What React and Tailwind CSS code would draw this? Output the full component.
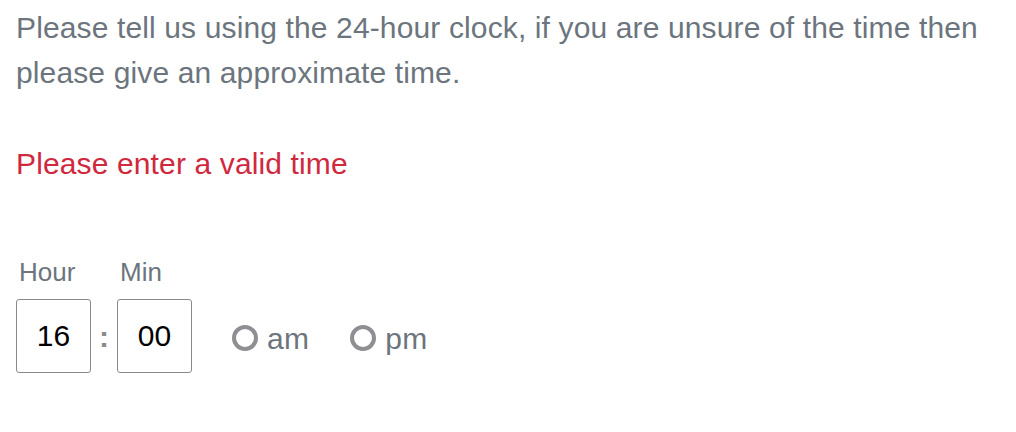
import React from "react";

function Radio({ label }) {
  return (
    <label className="flex items-center cursor-pointer">
      <span className="w-[26px] h-[26px] rounded-full border-[4px] border-[#8e8e93] bg-white" />
      <span className="ml-[9px] text-[30px] leading-[45px] tracking-[0.3px] text-[#6c757d]">{label}</span>
    </label>
  );
}

export default function App() {
  return (
    <div className="w-[1016px] h-[432px] bg-white px-4 pt-[5px] font-['Liberation_Sans',Arial,sans-serif]">
      <p className="text-[30px] leading-[45px] tracking-[0.13px] text-[#6c757d]">
        {"Please tell us using the 24-hour clock, if you are unsure of the time then please give an approximate time."}
      </p>

      <p className="mt-[46px] text-[30px] leading-[45px] tracking-[0.13px] text-[#d0283e]">{"Please enter a valid time"}</p>

      <div className="mt-[67px] flex items-end">
        <div className="flex flex-col">
          <span className="pl-[3px] text-[26px] leading-[39px] text-[#6c757d]">{"Hour"}</span>
          <input
            type="text"
            defaultValue="16"
            className="mt-[7px] w-[75px] h-[74px] border border-[#8a8a8e] rounded-[3px] text-center text-[30px] text-black outline-none"
          />
        </div>
        <span className="w-[26px] h-[74px] flex items-center justify-center text-[30px] font-bold text-[#8a8a8e]">{":"}</span>
        <div className="flex flex-col">
          <span className="pl-[3px] text-[26px] leading-[39px] text-[#6c757d]">{"Min"}</span>
          <input
            type="text"
            defaultValue="00"
            className="mt-[7px] w-[75px] h-[74px] border border-[#8a8a8e] rounded-[3px] text-center text-[30px] text-black outline-none"
          />
        </div>
        <div className="ml-[40px] h-[74px] flex items-center gap-[41px] pt-[4px]">
          <Radio label="am" />
          <Radio label="pm" />
        </div>
      </div>
    </div>
  );
}
